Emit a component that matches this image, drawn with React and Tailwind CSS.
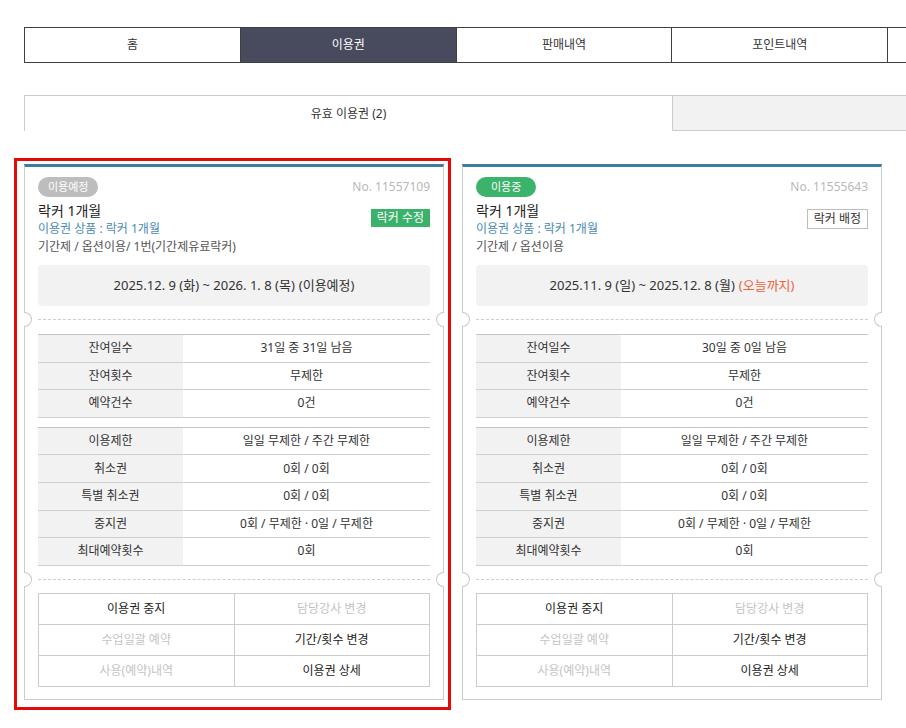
const navTabs = ['홈', '이용권', '판매내역', '포인트내역', ''];

const usageRows = [
  ['잔여일수', null],
  ['잔여횟수', '무제한'],
  ['예약건수', '0건'],
];

const limitRows = [
  ['이용제한', '일일 무제한 / 주간 무제한'],
  ['취소권', '0회 / 0회'],
  ['특별 취소권', '0회 / 0회'],
  ['중지권', '0회 / 무제한 · 0일 / 무제한'],
  ['최대예약횟수', '0회'],
];

const actions = [
  ['이용권 중지', true],
  ['담당강사 변경', false],
  ['수업일괄 예약', false],
  ['기간/횟수 변경', true],
  ['사용(예약)내역', false],
  ['이용권 상세', true],
];

const Divider = () => (
  <div className="relative -mx-[13px]">
    <div className="mx-[13px] border-t border-dashed border-[#cfcfcf]" />
    <div className="absolute left-[-1px] top-[-7px] w-[8px] h-[15px] rounded-r-full border border-l-0 border-[#c8c8c8] bg-white" />
    <div className="absolute right-[-1px] top-[-7px] w-[8px] h-[15px] rounded-l-full border border-r-0 border-[#c8c8c8] bg-white" />
  </div>
);

const InfoTable = ({ rows, remain }) => (
  <div className="border-t border-[#c4c4c4]">
    {rows.map(([label, value]) => (
      <div key={label} className="flex h-[27.6px] border-b border-[#cfcfcf] text-[12px] text-[#333]">
        <div className="w-[145px] bg-[#f2f2f2] flex items-center justify-center">{label}</div>
        <div className="flex-1 flex items-center justify-center">{value ?? remain}</div>
      </div>
    ))}
  </div>
);

const PassCard = ({ pass }) => (
  <div className="w-[420px] border border-[#cccccc] border-t-[3px] border-t-[#3e7c9e] bg-white px-[13px] pt-[10px] pb-[12px]">
    <div className="flex items-center justify-between">
      <span className={`h-[20px] rounded-full text-white text-[11px] flex items-center ${pass.badgeClass}`}>
        {pass.badge}
      </span>
      <span className="text-[12px] text-[#b8b8b8]">No. {pass.no}</span>
    </div>
    <div className="mt-[5px] flex items-start justify-between">
      <div className="leading-[18px]">
        <p className="text-[14px] text-[#222]">락커 1개월</p>
        <p className="text-[12px] text-[#4a8bb3]">이용권 상품 : 락커 1개월</p>
        <p className="text-[12px] text-[#555]">{pass.kind}</p>
      </div>
      {pass.locker === '락커 수정' ? (
        <span className="mt-[7px] h-[18px] px-[6px] bg-[#3bb16c] text-white text-[12px] flex items-center">락커 수정</span>
      ) : (
        <span className="mt-[7px] h-[20px] px-[6px] border border-[#bdbdbd] text-[#333] text-[12px] flex items-center">락커 배정</span>
      )}
    </div>
    <div className="mt-[9px] h-[41px] rounded-[4px] bg-[#f2f2f2] flex items-center justify-center text-[13px] text-[#333]">
      {pass.period}
      <span className={`ml-[4px] ${pass.tagClass}`}>{pass.tag}</span>
    </div>
    <div className="mt-[13px]">
      <Divider />
    </div>
    <div className="mt-[14px]">
      <InfoTable rows={usageRows} remain={pass.remain} />
    </div>
    <div className="mt-[9px]">
      <InfoTable rows={limitRows} />
    </div>
    <div className="mt-[13px]">
      <Divider />
    </div>
    <div className="mt-[13px] grid grid-cols-2 border-t border-l border-[#cccccc]">
      {actions.map(([label, active]) => (
        <div
          key={label}
          className={`h-[31px] border-r border-b border-[#cccccc] flex items-center justify-center text-[12px] ${active ? 'text-[#222]' : 'text-[#c4c4c4]'}`}
        >
          {label}
        </div>
      ))}
    </div>
  </div>
);

const passes = [
  {
    badge: '이용예정',
    badgeClass: 'bg-[#bdbdbd] px-[10px]',
    no: '11557109',
    kind: '기간제 / 옵션이용/ 1번(기간제유료락커)',
    locker: '락커 수정',
    period: '2025.12. 9 (화) ~ 2026. 1. 8 (목)',
    tag: '(이용예정)',
    tagClass: 'text-[#333]',
    remain: '31일 중 31일 남음',
  },
  {
    badge: '이용중',
    badgeClass: 'bg-[#3bb36b] px-[15px]',
    no: '11555643',
    kind: '기간제 / 옵션이용',
    locker: '락커 배정',
    period: '2025.11. 9 (일) ~ 2025.12. 8 (월)',
    tag: '(오늘까지)',
    tagClass: 'text-[#f0603a]',
    remain: '30일 중 0일 남음',
  },
];

export default function App() {
  return (
    <div
      className="relative w-[906px] h-[728px] overflow-hidden bg-white"
      style={{ fontFamily: '"Noto Sans", "Noto Sans CJK KR", sans-serif' }}
    >
      <div className="pl-[24px] pt-[27px] w-[1104px]">
        {/* main nav */}
        <div className="flex w-[1080px] h-[36px] border-y border-l border-[#3f3f3f]">
          {navTabs.map((t, i) => (
            <div
              key={i}
              className={`w-[216px] flex items-center justify-center text-[12px] border-r border-[#3f3f3f] ${t === '이용권' ? 'bg-[#474b5d] text-white' : 'text-[#333]'}`}
            >
              {t}
            </div>
          ))}
        </div>

        {/* sub tabs */}
        <div className="mt-[32px] flex h-[36px]">
          <div className="w-[648px] border-t border-l border-[#cccccc] flex items-center justify-center text-[12px] text-[#333]">
            유효 이용권 (2)
          </div>
          <div className="w-[432px] bg-[#f2f2f2] border border-[#cccccc]" />
        </div>

        {/* cards */}
        <div className="mt-[33px] flex gap-[18px]">
          {passes.map((p) => (
            <PassCard key={p.no} pass={p} />
          ))}
        </div>
      </div>

      {/* highlight box */}
      <div className="absolute left-[14px] top-[158px] w-[437px] h-[552px] border-[3px] border-[#e50a0a] pointer-events-none" />
    </div>
  );
}
